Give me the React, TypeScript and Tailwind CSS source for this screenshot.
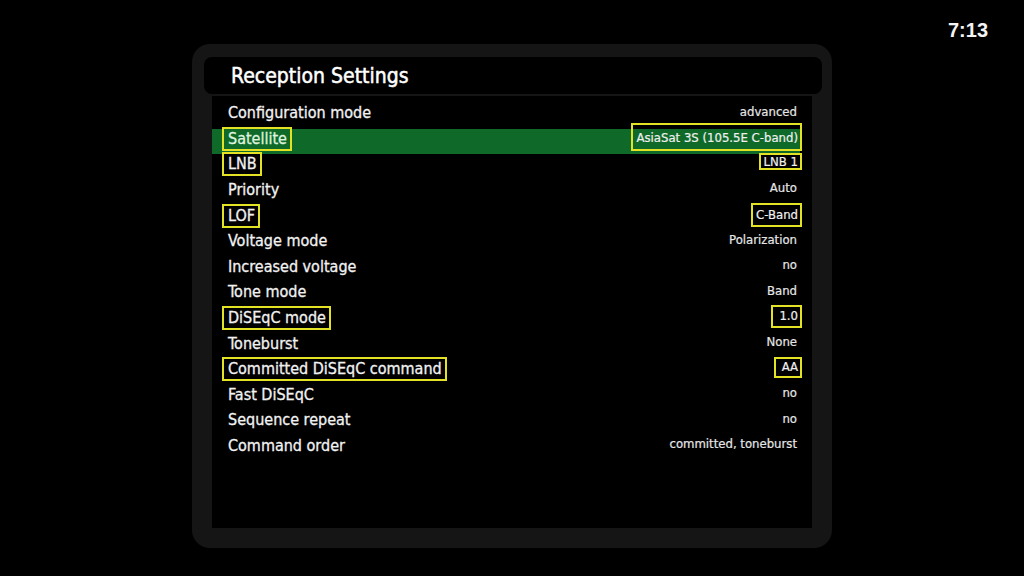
import React from 'react'

type Row = {
  label: string
  value: string
  boxLabel?: boolean
  valueBox?: string
  selected?: boolean
}

const rows: Row[] = [
  { label: 'Configuration mode', value: 'advanced' },
  { label: 'Satellite', value: 'AsiaSat 3S (105.5E C-band)', boxLabel: true, valueBox: 'h-[28px] mt-[-3px]', selected: true },
  { label: 'LNB', value: 'LNB 1', boxLabel: true, valueBox: 'h-[17px] mt-[-6px]' },
  { label: 'Priority', value: 'Auto' },
  { label: 'LOF', value: 'C-Band', boxLabel: true, valueBox: 'h-[24px] mt-[-2px]' },
  { label: 'Voltage mode', value: 'Polarization' },
  { label: 'Increased voltage', value: 'no' },
  { label: 'Tone mode', value: 'Band' },
  { label: 'DiSEqC mode', value: '1.0', boxLabel: true, valueBox: 'h-[23px] mt-[-4px] pl-[6px]' },
  { label: 'Toneburst', value: 'None' },
  { label: 'Committed DiSEqC command', value: 'AA', boxLabel: true, valueBox: 'h-[21px] mt-[-4px] pl-[6px]' },
  { label: 'Fast DiSEqC', value: 'no' },
  { label: 'Sequence repeat', value: 'no' },
  { label: 'Command order', value: 'committed, toneburst' },
]

function SettingRow({ row }: { row: Row }) {
  return (
    <div
      className={`h-[25.6px] pb-[5px] flex items-center justify-between mr-[12px] ${
        row.selected ? 'bg-[#0f6a29]' : ''
      }`}
    >
      {row.boxLabel ? (
        <span
          className={`ml-[10px] h-[24px] shrink-0 flex items-center border-2 border-[#e4e224] pl-[4px] pr-[3px] text-[16px] [-webkit-text-stroke:0.3px_currentColor] ${
            row.selected ? 'text-[#dff3df]' : 'text-[#f2f2f2]'
          }`}
        >
          {row.label}
        </span>
      ) : (
        <span className="ml-[16px] text-[16px] text-[#f2f2f2] [-webkit-text-stroke:0.3px_currentColor]">
          {row.label}
        </span>
      )}
      {row.valueBox ? (
        <span
          className={`shrink-0 flex items-center border-2 border-[#e4e224] pl-[3px] pr-[2px] mr-[-2px] text-[13px] text-[#f0f0f0] [-webkit-text-stroke:0.2px_currentColor] ${row.valueBox}`}
        >
          {row.value}
        </span>
      ) : (
        <span className="mr-[3px] mb-[4px] text-[13px] text-[#e6e6e6] [-webkit-text-stroke:0.2px_currentColor]">
          {row.value}
        </span>
      )}
    </div>
  )
}

export default function App() {
  return (
    <div
      className="relative w-[1024px] h-[576px] bg-black overflow-hidden pt-[44px]"
      style={{ fontFamily: '"DejaVu Sans Condensed", "DejaVu Sans", sans-serif' }}
    >
      <div
        className="absolute top-[15px] right-[36px] text-[20px] font-bold text-[#f4f4f4]"
        style={{ fontFamily: '"Liberation Sans", Arial, sans-serif' }}
      >
        7:13
      </div>

      <div className="mx-auto w-[640px] h-[504px] rounded-[18px] bg-[#151515] flex flex-col pt-[13px] pb-[20px]">
        <div className="ml-[12px] mr-[10px] h-[37px] shrink-0 rounded-[8px] bg-black flex items-center pl-[27px]">
          <span className="text-[21px] mt-[2px] text-white [-webkit-text-stroke:0.5px_white]">Reception Settings</span>
        </div>
        <div className="mx-[20px] mt-[2px] flex-1 bg-black pt-[7px]">
          {rows.map(r => (
            <SettingRow key={r.label} row={r} />
          ))}
        </div>
      </div>
    </div>
  )
}
